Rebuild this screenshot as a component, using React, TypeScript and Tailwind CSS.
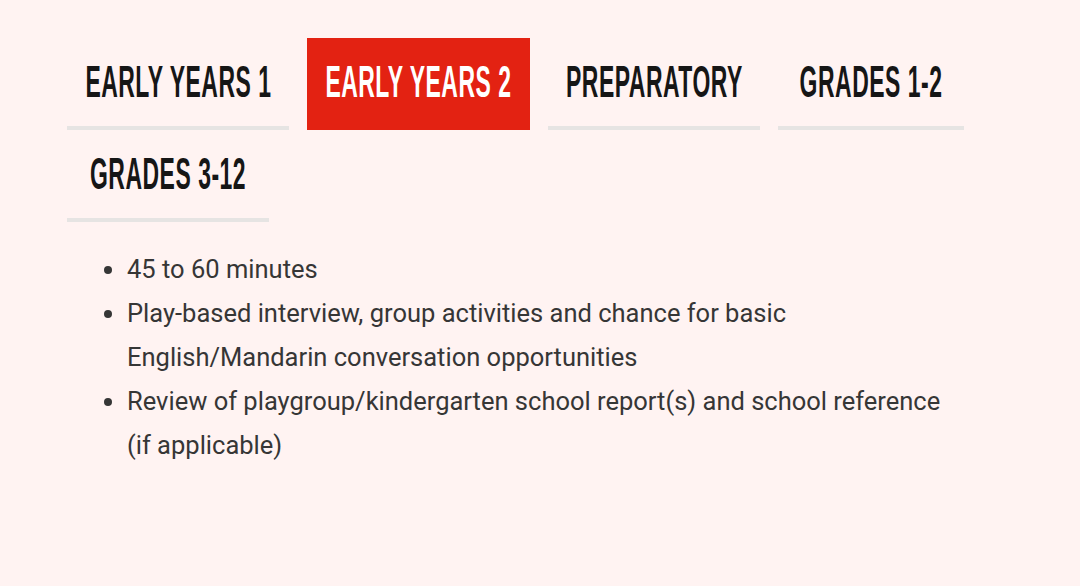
import React, { useState } from "react";

const tabs = [
  { label: "Early Years 1", width: "w-[222px]" },
  { label: "Early Years 2", width: "w-[223px]" },
  { label: "Preparatory", width: "w-[212px]" },
  { label: "Grades 1-2", width: "w-[186px]" },
  { label: "Grades 3-12", width: "w-[202px]" },
];

export default function App() {
  const [active, setActive] = useState(1);

  return (
    <div className="min-h-[586px] w-full bg-[#fff3f2] pl-[67px] pr-[67px] pt-[38px]">
      <div className="flex flex-wrap gap-x-[18px]">
        {tabs.map((tab, i) => (
          <button
            key={tab.label}
            onClick={() => setActive(i)}
            className={`${tab.width} flex h-[92px] flex-col`}
          >
            <span
              className={`flex h-[88px] w-full items-center justify-center overflow-visible pb-[2px] ${
                i === active ? "bg-[#e32212] text-white" : "text-[#161616]"
              }`}
            >
              {/* condensed display face, squeezed to match the narrow headline font */}
              <span className="inline-block origin-center scale-x-[0.51] whitespace-nowrap font-['Liberation_Sans_Narrow','Liberation_Sans',sans-serif] text-[45px] font-bold uppercase leading-none tracking-[1px]">
                {tab.label}
              </span>
            </span>
            <span
              className={`h-[4px] w-full ${i === active ? "bg-[#e32212]" : "bg-[#e6e4e3]"}`}
            />
          </button>
        ))}
      </div>
      <ul className="mt-[25px] list-disc pl-[60px] font-['Roboto',sans-serif] text-[25.5px] leading-[44px] text-[#363636] marker:text-[#363636]">
        <li>45 to 60 minutes</li>
        <li>
          Play-based interview, group activities and chance for basic
          <br />
          English/Mandarin conversation opportunities
        </li>
        <li>
          Review of playgroup/kindergarten school report(s) and school reference
          <br />
          (if applicable)
        </li>
      </ul>
    </div>
  );
}
